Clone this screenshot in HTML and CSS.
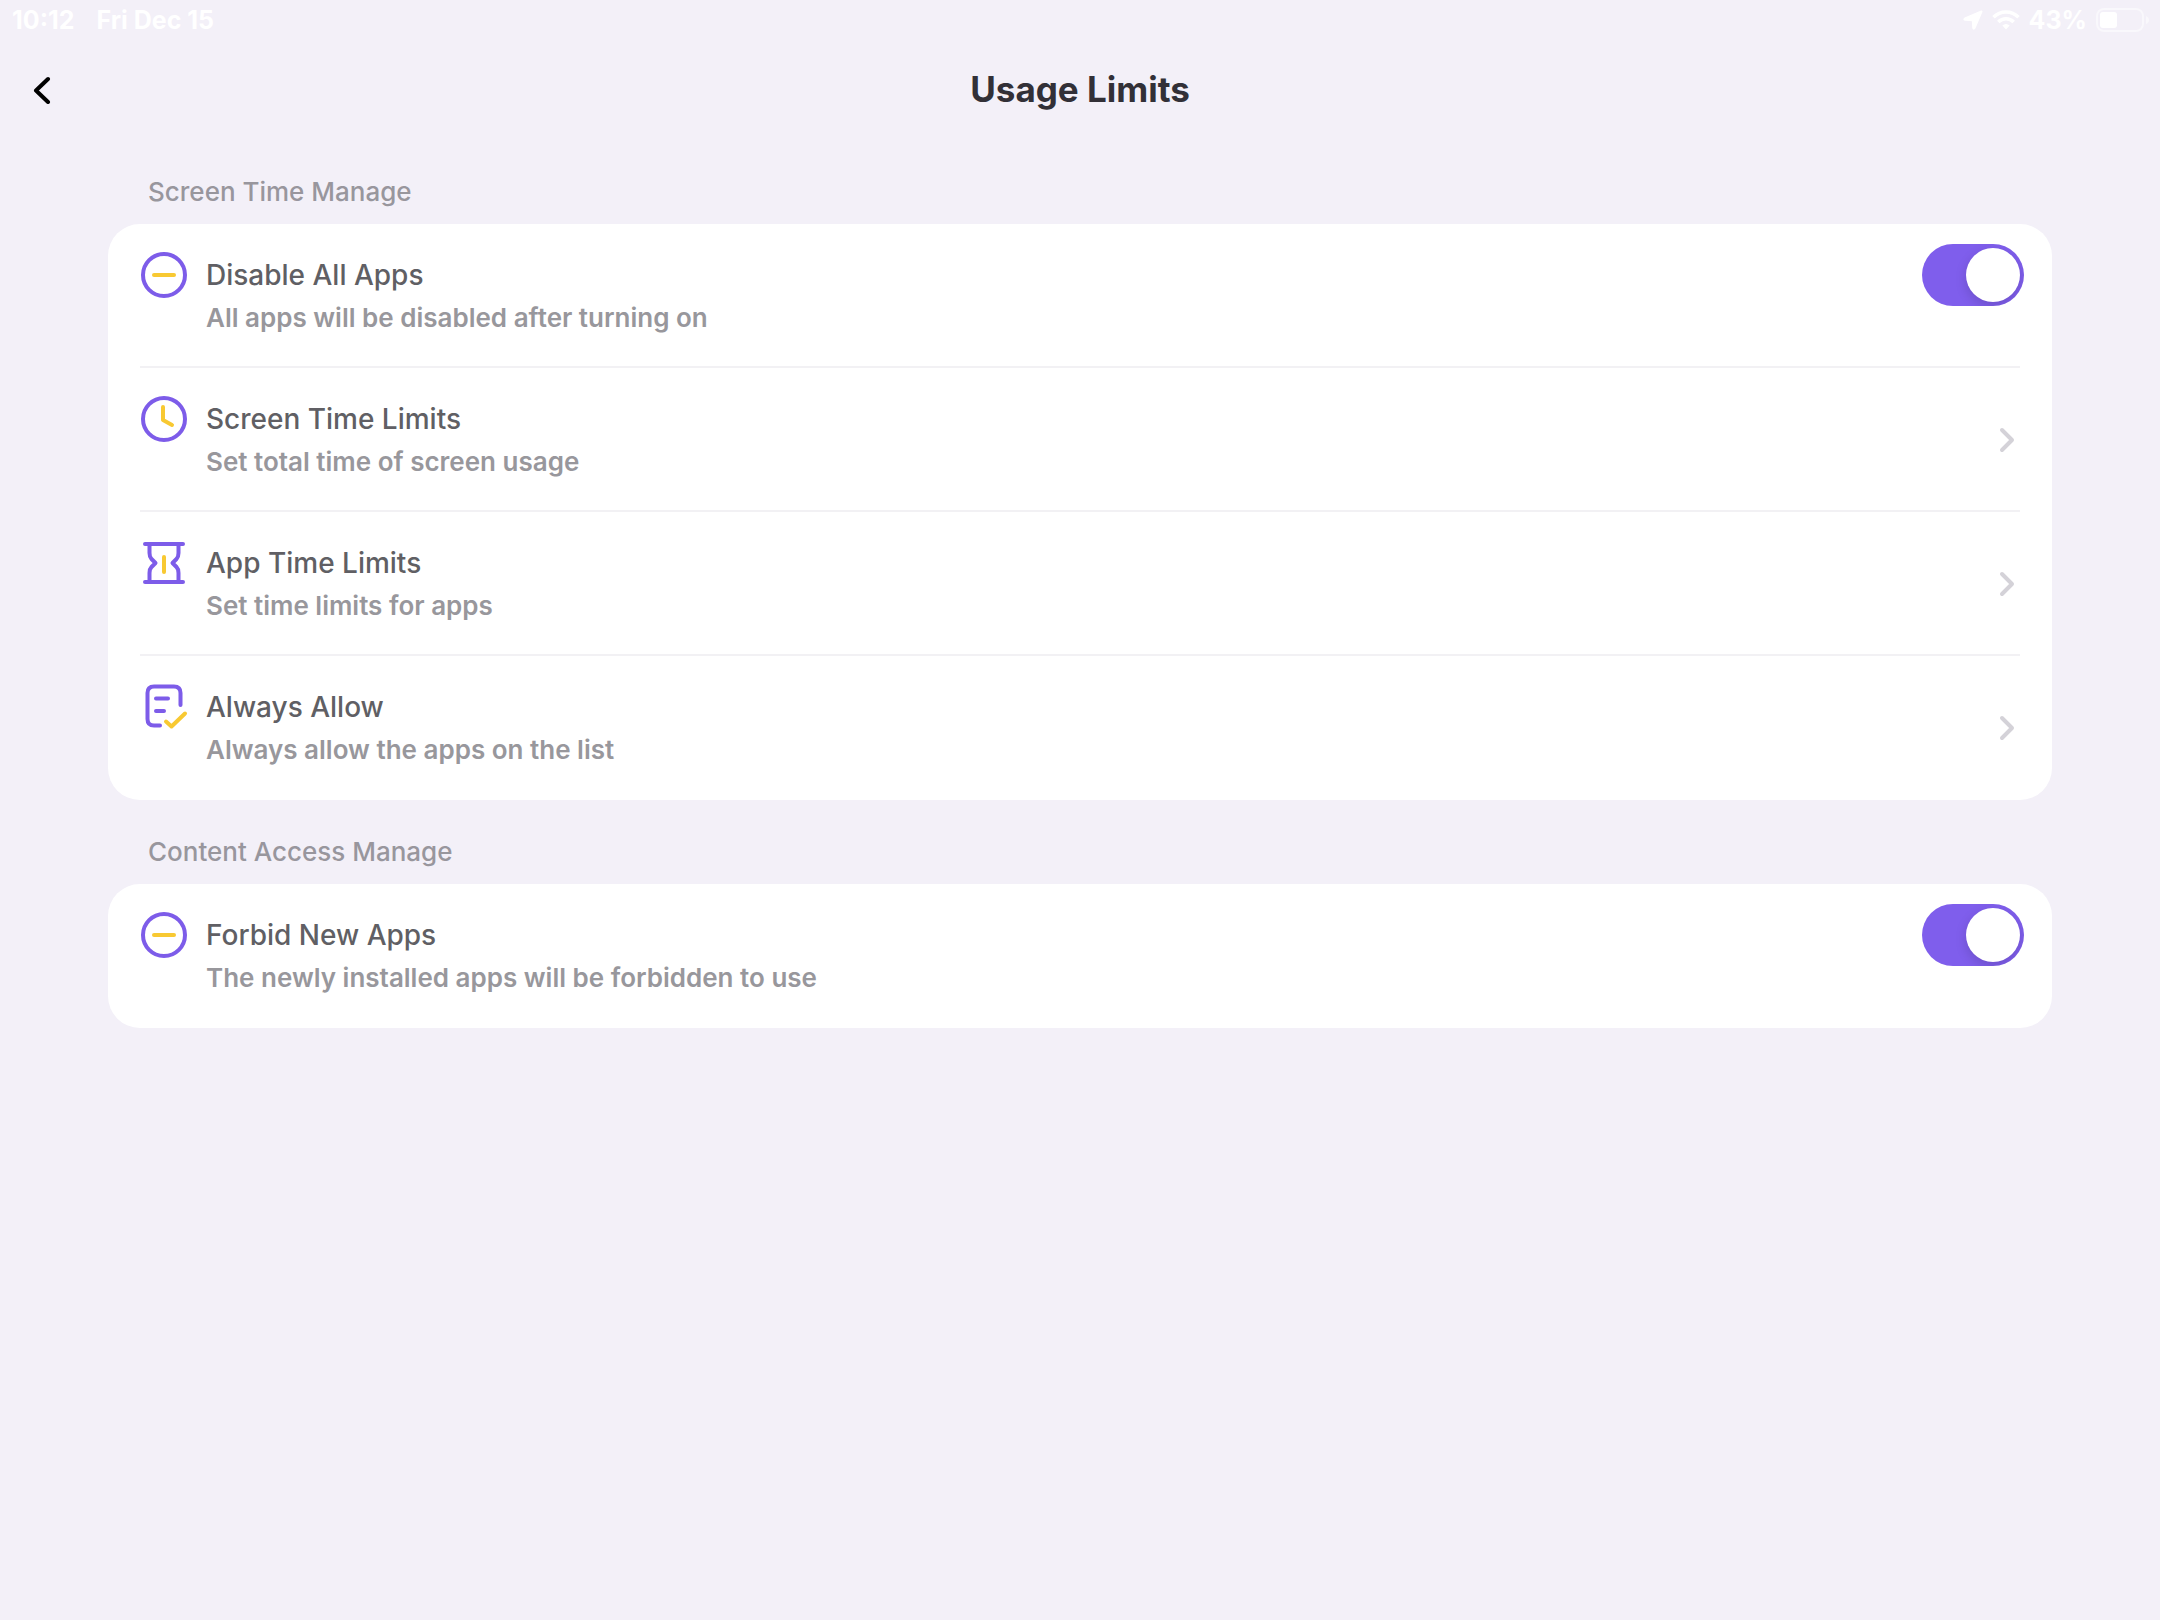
FILE: index.html
```html
<!DOCTYPE html>
<html lang="en">
<head>
<meta charset="utf-8">
<meta name="viewport" content="width=device-width, initial-scale=1">
<title>Usage Limits</title>
<link rel="stylesheet" href="styles.css">
</head>
<body>
<div class="status-bar">
  <div class="status-group status-left">
    <span>10:12</span>
    <span>Fri Dec 15</span>
  </div>
  <div class="status-group status-right">
    <svg width="20" height="20" viewBox="0 0 20 20" aria-hidden="true"><path d="M18.500 1.500 11.500 18Q10.500 19.500 10.200 17.500L9.800 10.200 2.500 9.800Q.5 9.500 2 8.500Z" fill="currentColor" stroke="currentColor" stroke-width="2" stroke-linejoin="round"/></svg>
    <svg width="28" height="20" viewBox="0 0 28 20" fill="none" stroke="currentColor" aria-hidden="true"><path d="M1.500 7.300C8.500.3 19.500.3 26.500 7.300M6.300 12C10.700 7.700 17.300 7.700 21.700 12" stroke-width="3.600"/><path d="M10.300 15.500Q14 12.300 17.700 15.500L14 19.500Z" fill="currentColor" stroke="none"/></svg>
    <span>43%</span>
    <svg width="54" height="24" viewBox="0 0 54 24" aria-hidden="true"><rect x="1" y="1" width="46" height="22" rx="7" fill="none" stroke="currentColor" stroke-width="2" opacity=".5"/><rect x="4" y="4" width="17" height="16" rx="3" fill="currentColor"/><path d="M50 8Q53 9 53 12T50 16Z" fill="currentColor" opacity=".5"/></svg>
  </div>
</div>

<header class="header">
  <button class="back" type="button" aria-label="Back">
    <svg width="20" height="30" viewBox="0 0 20 30" fill="none" stroke="currentColor" stroke-width="4" stroke-linecap="round" stroke-linejoin="round" aria-hidden="true"><path d="M16 5 4 16.500 16 28"/></svg>
  </button>
  <h1 class="title">Usage Limits</h1>
</header>

<main class="content">
  <section>
    <h2 class="section-title">Screen Time Manage</h2>
    <ul class="card">
      <li class="item">
        <label class="row" for="disable-all">
          <svg class="icon" viewBox="0 0 48 48" aria-hidden="true"><circle class="line" cx="24" cy="24" r="21"/><path class="accent" d="M14 24H34"/></svg>
          <span class="text"><span class="name">Disable All Apps</span><span class="detail">All apps will be disabled after turning on</span></span>
          <input class="switch" id="disable-all" type="checkbox" role="switch" checked>
        </label>
      </li>
      <li class="item">
        <a class="row" href="#screen-time">
          <svg class="icon" viewBox="0 0 48 48" aria-hidden="true"><circle class="line" cx="24" cy="24" r="21"/><path class="accent" d="M23 12V25L32 30"/></svg>
          <span class="text"><span class="name">Screen Time Limits</span><span class="detail">Set total time of screen usage</span></span>
          <svg class="chevron" viewBox="0 0 18 28" aria-hidden="true"><path d="M4 4 14 14 4 24"/></svg>
        </a>
      </li>
      <li class="item">
        <a class="row" href="#app-time">
          <svg class="icon" viewBox="0 0 48 48" aria-hidden="true"><path class="line" d="M5 5H43M5 43H43M9.500 5V14Q9.500 18 11.500 20L15.500 24 11.500 28Q9.500 30 9.500 34V43M38.500 5V14Q38.500 18 36.500 20L32.500 24 36.500 28Q38.500 30 38.500 34V43"/><path class="accent" d="M24 18V33"/></svg>
          <span class="text"><span class="name">App Time Limits</span><span class="detail">Set time limits for apps</span></span>
          <svg class="chevron" viewBox="0 0 18 28" aria-hidden="true"><path d="M4 4 14 14 4 24"/></svg>
        </a>
      </li>
      <li class="item">
        <a class="row" href="#always-allow">
          <svg class="icon" viewBox="0 0 48 48" aria-hidden="true"><path class="line" d="M20 42.500H14Q7.500 42.500 7.500 36V10Q7.500 3.500 14 3.500H34Q40.500 3.500 40.500 10V22M16 15.500H28M16 28H24"/><path class="accent" d="M26 38.500 31.500 43.500 45 30.500"/></svg>
          <span class="text"><span class="name">Always Allow</span><span class="detail">Always allow the apps on the list</span></span>
          <svg class="chevron" viewBox="0 0 18 28" aria-hidden="true"><path d="M4 4 14 14 4 24"/></svg>
        </a>
      </li>
    </ul>
  </section>

  <section>
    <h2 class="section-title">Content Access Manage</h2>
    <ul class="card">
      <li class="item">
        <label class="row" for="forbid-new">
          <svg class="icon" viewBox="0 0 48 48" aria-hidden="true"><circle class="line" cx="24" cy="24" r="21"/><path class="accent" d="M14 24H34"/></svg>
          <span class="text"><span class="name">Forbid New Apps</span><span class="detail">The newly installed apps will be forbidden to use</span></span>
          <input class="switch" id="forbid-new" type="checkbox" role="switch" checked>
        </label>
      </li>
    </ul>
  </section>
</main>
</body>
</html>
```
FILE: styles.css
```css
* {
  box-sizing: border-box;
}

body {
  margin: 0;
  min-height: 100vh;
  background: #f3f0f8;
  color: #323037;
  font-family: Inter, "Liberation Sans", sans-serif;
}

.status-bar {
  display: flex;
  justify-content: space-between;
  height: 40px;
  padding: 0 10px 0 12px;
  color: #fff;
  font-size: 25px;
  font-weight: 700;
  line-height: 40px;
}

.status-group {
  display: flex;
  align-items: center;
}

.status-left {
  gap: 22px;
}

.status-right {
  gap: 9px;
}

.header {
  display: grid;
  grid-template-columns: 84px 1fr 84px;
  align-items: center;
  height: 100px;
  padding-bottom: 2px;
}

.back {
  display: flex;
  align-items: center;
  justify-content: center;
  height: 84px;
  padding: 0;
  border: 0;
  background: none;
  color: #000;
}

.title {
  margin: 0;
  font-size: 35px;
  font-weight: 700;
  line-height: 44px;
  text-align: center;
}

.content {
  padding: 0 5%;
}

.section-title {
  margin: 0;
  padding: 36px 40px 16px;
  color: #98969d;
  font-size: 26px;
  font-weight: 500;
  line-height: 32px;
}

.card {
  margin: 0;
  padding: 0 32px;
  border-radius: 32px;
  background: #fff;
  list-style: none;
}

.row {
  display: flex;
  align-items: flex-start;
  gap: 18px;
  height: 144px;
  padding-top: 27px;
  border-bottom: 2px solid #f2f1f4;
  color: inherit;
  text-decoration: none;
}

.item:last-child .row {
  border-bottom: 0;
}

.icon {
  flex: none;
  width: 48px;
  height: 48px;
  fill: none;
  stroke-width: 4;
  stroke-linecap: round;
  stroke-linejoin: round;
}

.line {
  stroke: #7d5ce9;
}

.accent {
  stroke: #f8c932;
}

.text {
  display: flex;
  flex: 1;
  flex-direction: column;
}

.name {
  color: #605f64;
  font-size: 28px;
  font-weight: 500;
  line-height: 48px;
}

.detail {
  color: #98979c;
  font-size: 26px;
  font-weight: 600;
  line-height: 38px;
}

.switch {
  appearance: none;
  display: flex;
  flex: none;
  width: 102px;
  height: 62px;
  margin: -7px -4px 0 0;
  padding: 4px;
  border-radius: 31px;
  background: #d9d7df;
  overflow: hidden;
}

.switch::before {
  content: "";
  width: 54px;
  height: 54px;
  border-radius: 50%;
  background: #fff;
  box-shadow: 0 4px 12px rgba(0, 0, 0, 0.15);
}

.switch:checked {
  justify-content: flex-end;
  background: #7f5eec;
}

.chevron {
  flex: none;
  width: 18px;
  height: 28px;
  margin: 31px 4px 0 0;
  fill: none;
  stroke: #d4d2d8;
  stroke-width: 4;
  stroke-linecap: round;
  stroke-linejoin: round;
}
```
